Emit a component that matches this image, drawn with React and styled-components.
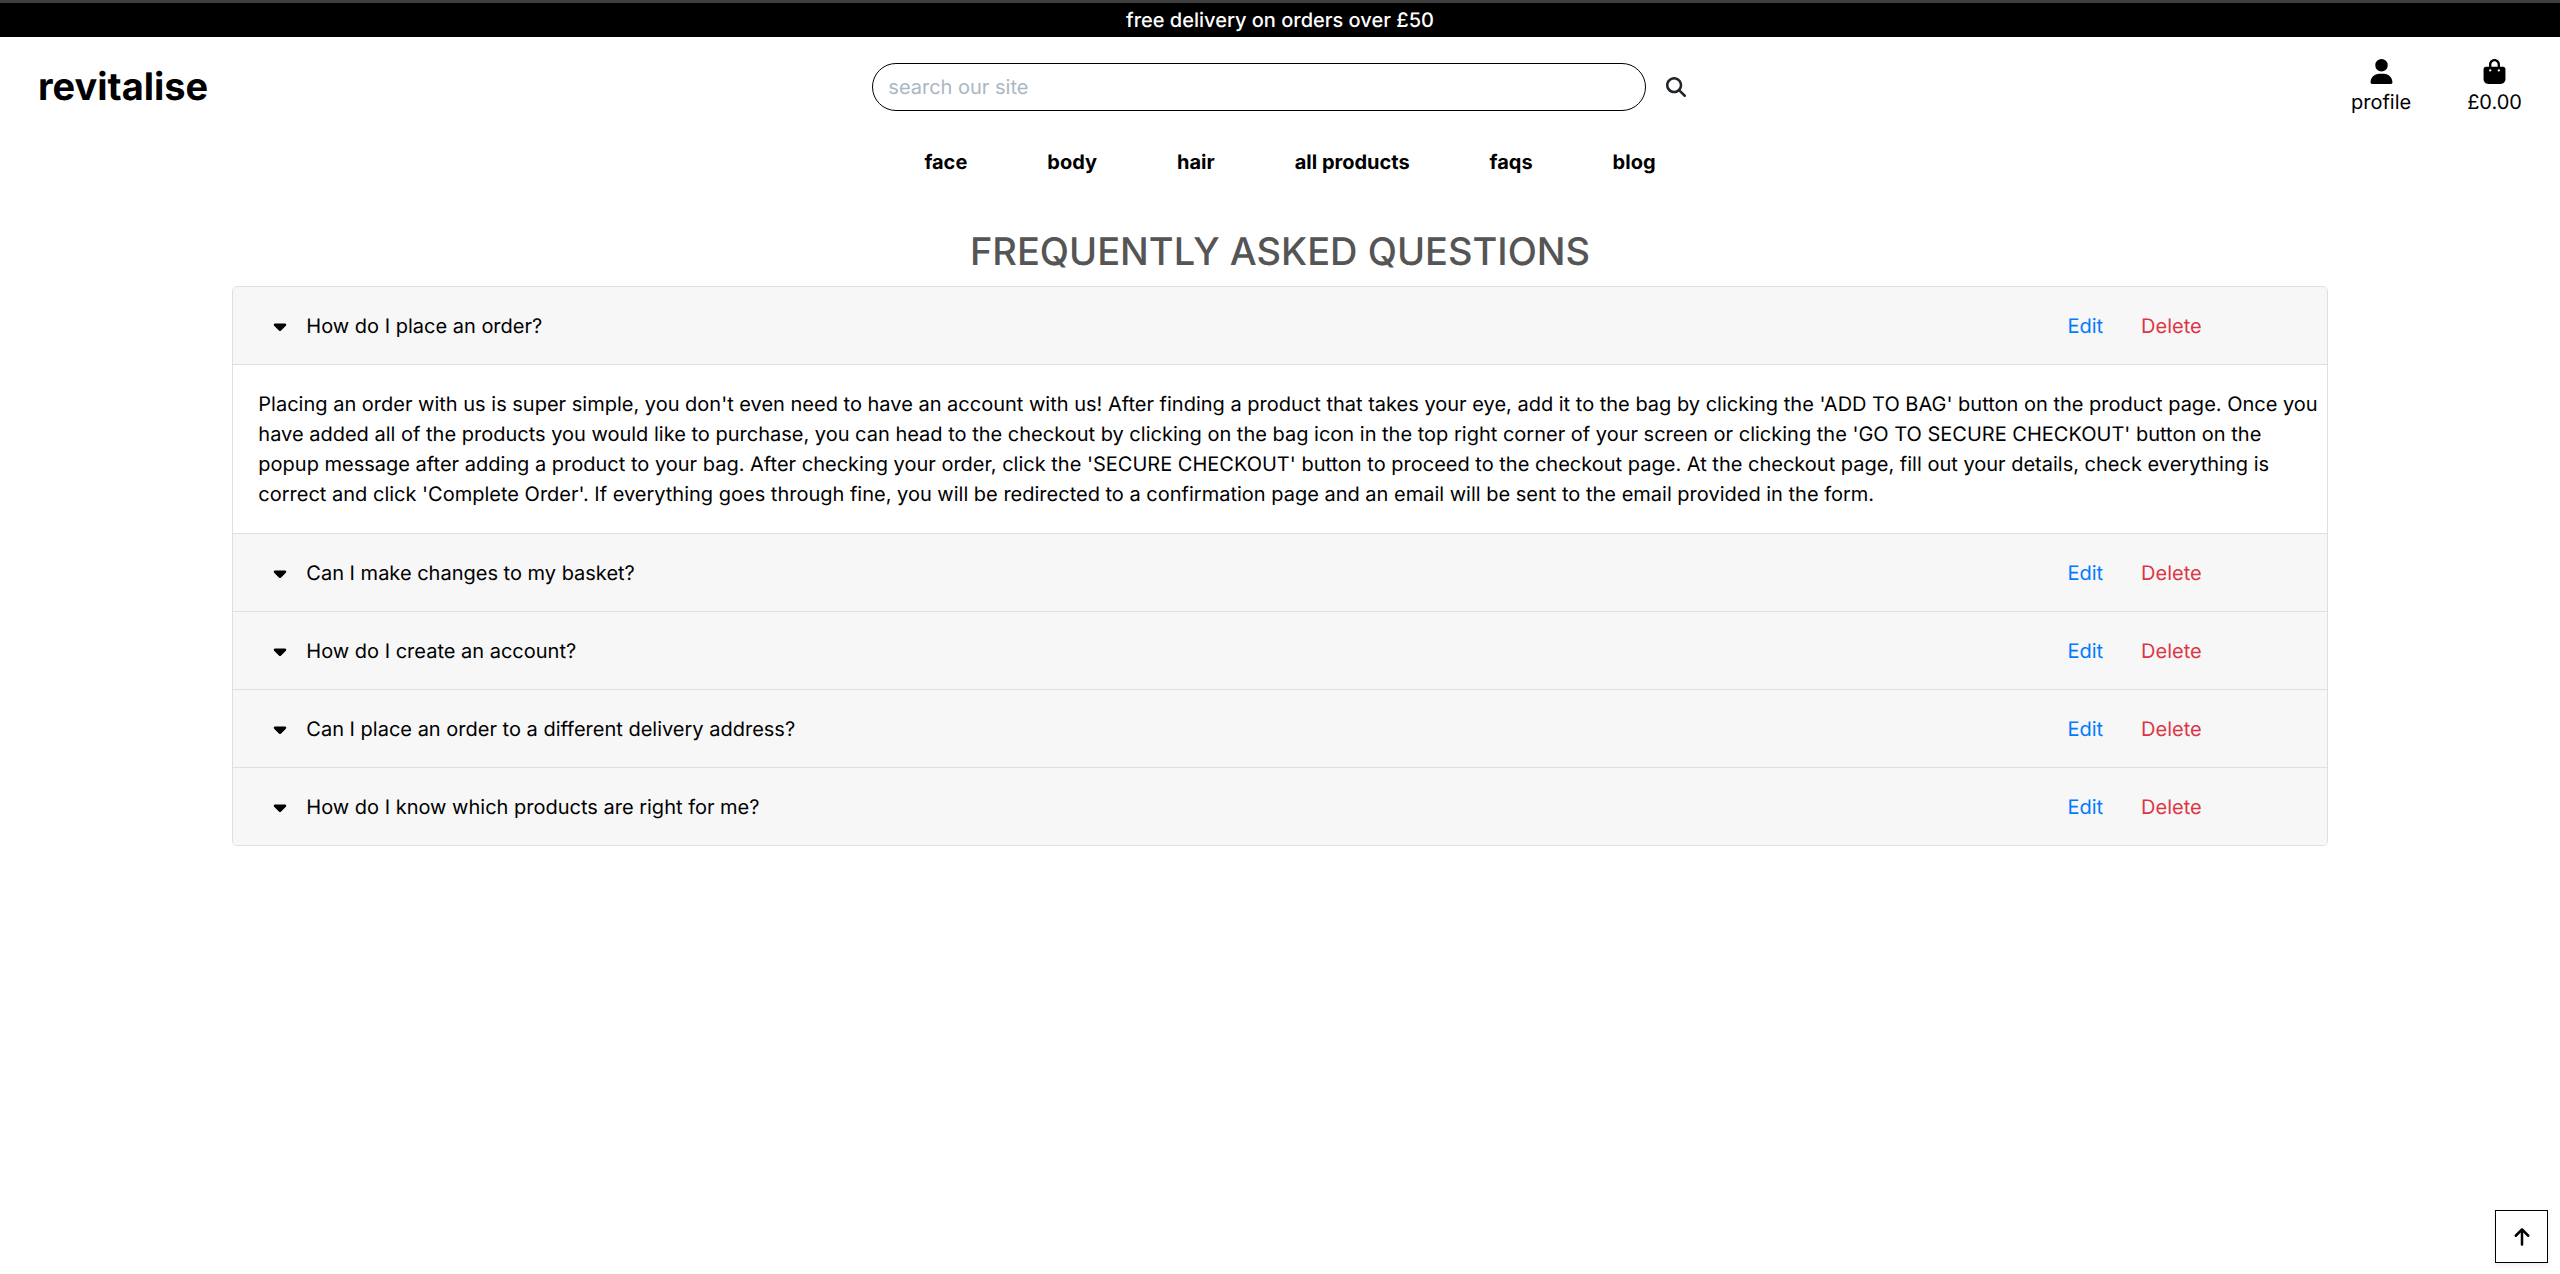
import React, { useState } from "react";
import styled, { createGlobalStyle } from "styled-components";
import {
  FaArrowUp,
  FaBagShopping,
  FaCaretDown,
  FaMagnifyingGlass,
  FaUser,
} from "react-icons/fa6";

const GlobalStyle = createGlobalStyle`
  *, *::before, *::after { box-sizing: border-box; }
  body {
    margin: 0;
    background: #fff;
    color: #000;
    font-family: Inter, "Liberation Sans", sans-serif;
    font-size: 20px;
    line-height: 30px;
    text-rendering: geometricPrecision;
  }
  a { color: inherit; text-decoration: none; }
  button, input { font: inherit; color: inherit; text-rendering: inherit; }
  button { cursor: pointer; }
  svg { display: block; }
`;

const Banner = styled.div`
  border-top: 3px solid #3f3f3f;
  padding: 2px 0;
  background: #000;
  color: #fff;
  font-weight: 500;
  text-align: center;
`;

const Header = styled.header`
  display: grid;
  grid-template-columns: repeat(3, 1fr);
  align-items: center;
  padding-top: 20px;
`;

const Logo = styled.a`
  justify-self: start;
  padding-left: 38px;
  font-size: 38px;
  line-height: 48px;
  font-weight: 700;
`;

const Search = styled.form`
  display: flex;
  align-items: center;
  padding: 0 19px;
`;

const SearchInput = styled.input`
  flex: 1;
  min-width: 0;
  height: 48px;
  padding: 0 15px;
  border: 1px solid #000;
  border-radius: 24px;
  background: #fff;
  &::placeholder { color: #aab7c4; opacity: 1; }
`;

const SearchButton = styled.button`
  padding: 10px 2px 10px 20px;
  border: 0;
  background: none;
  color: #212529;
`;

const Account = styled.nav`
  display: flex;
  justify-content: flex-end;
  gap: 56px;
  padding: 2px 38px 0 0;
`;

const AccountLink = styled.a`
  display: flex;
  flex-direction: column;
  align-items: center;
  gap: 3px;
`;

const MainNav = styled.nav`
  display: flex;
  justify-content: center;
  gap: 80px;
  padding: 30px 0 0 20px;
  font-weight: 700;
`;

const Main = styled.main`
  width: calc(100% * 10 / 12);
  margin: 0 auto;
  padding: 51px 19px 80px;
`;

const Title = styled.h1`
  margin: 0 0 10px;
  color: #555;
  font-size: 38px;
  line-height: 48px;
  font-weight: 500;
  text-align: center;
`;

const Accordion = styled.div`
  overflow: hidden;
  border: 1px solid #dfdfdf;
  border-radius: 5px;
`;

const Item = styled.section`
  & + & { border-top: 1px solid #dfdfdf; }
`;

const ItemHeader = styled.div`
  display: flex;
  align-items: center;
  min-height: 77px;
  padding: 0 125px 0 25px;
  background: #f7f7f7;
`;

const QuestionHeading = styled.h2`
  flex: 1;
  margin: 0;
  font-size: 20px;
  line-height: 30px;
  font-weight: 400;
`;

const Question = styled.button`
  display: flex;
  align-items: center;
  gap: 16px;
  padding: 0 12px;
  border: 0;
  background: none;
  text-align: left;
`;

const Actions = styled.div`
  display: flex;
  gap: 38px;
`;

const ActionLink = styled.a`
  color: ${({ $danger }) => ($danger ? "#dc3545" : "#007bff")};
`;

const Answer = styled.div`
  padding: 24px 6px 24px 25px;
  border-top: 1px solid #dfdfdf;
`;

const BackToTop = styled.button`
  position: fixed;
  right: 12px;
  bottom: 11px;
  display: grid;
  place-items: center;
  width: 53px;
  height: 53px;
  padding: 0;
  border: 1px solid #000;
  background: #fff;
  box-shadow: 0 2px 5px rgba(0, 0, 0, 0.08);
`;

const links = ["face", "body", "hair", "all products", "faqs", "blog"];

const faqs = [
  {
    question: "How do I place an order?",
    answer:
      "Placing an order with us is super simple, you don't even need to have an account with us! After finding a product that takes your eye, add it to the bag by clicking the 'ADD TO BAG' button on the product page. Once you have added all of the products you would like to purchase, you can head to the checkout by clicking on the bag icon in the top right corner of your screen or clicking the 'GO TO SECURE CHECKOUT' button on the popup message after adding a product to your bag. After checking your order, click the 'SECURE CHECKOUT' button to proceed to the checkout page. At the checkout page, fill out your details, check everything is correct and click 'Complete Order'. If everything goes through fine, you will be redirected to a confirmation page and an email will be sent to the email provided in the form.",
  },
  { question: "Can I make changes to my basket?" },
  { question: "How do I create an account?" },
  { question: "Can I place an order to a different delivery address?" },
  { question: "How do I know which products are right for me?" },
];

export default function App() {
  const [open, setOpen] = useState(0);

  return (
    <>
      <GlobalStyle />
      <Banner>free delivery on orders over £50</Banner>
      <Header>
        <Logo href="#">revitalise</Logo>
        <Search role="search" onSubmit={(e) => e.preventDefault()}>
          <SearchInput type="text" aria-label="search our site" placeholder="search our site" />
          <SearchButton type="submit" aria-label="search">
            <FaMagnifyingGlass size={20} />
          </SearchButton>
        </Search>
        <Account aria-label="account">
          <AccountLink href="#profile">
            <FaUser size={25} />
            profile
          </AccountLink>
          <AccountLink href="#bag">
            <FaBagShopping size={25} />
            £0.00
          </AccountLink>
        </Account>
      </Header>
      <MainNav aria-label="main">
        {links.map((label) => (
          <a key={label} href={`#${label.replace(" ", "-")}`}>
            {label}
          </a>
        ))}
      </MainNav>
      <Main>
        <Title>FREQUENTLY ASKED QUESTIONS</Title>
        <Accordion>
          {faqs.map(({ question, answer }, i) => (
            <Item key={question}>
              <ItemHeader>
                <QuestionHeading>
                  <Question
                    type="button"
                    aria-expanded={open === i}
                    onClick={() => setOpen(open === i ? -1 : i)}
                  >
                    <FaCaretDown size={20} />
                    {question}
                  </Question>
                </QuestionHeading>
                <Actions>
                  <ActionLink href="#edit">Edit</ActionLink>
                  <ActionLink href="#delete" $danger>
                    Delete
                  </ActionLink>
                </Actions>
              </ItemHeader>
              {open === i && answer && <Answer>{answer}</Answer>}
            </Item>
          ))}
        </Accordion>
      </Main>
      <BackToTop
        type="button"
        aria-label="back to top"
        onClick={() => window.scrollTo({ top: 0, behavior: "smooth" })}
      >
        <FaArrowUp size={20} />
      </BackToTop>
    </>
  );
}
